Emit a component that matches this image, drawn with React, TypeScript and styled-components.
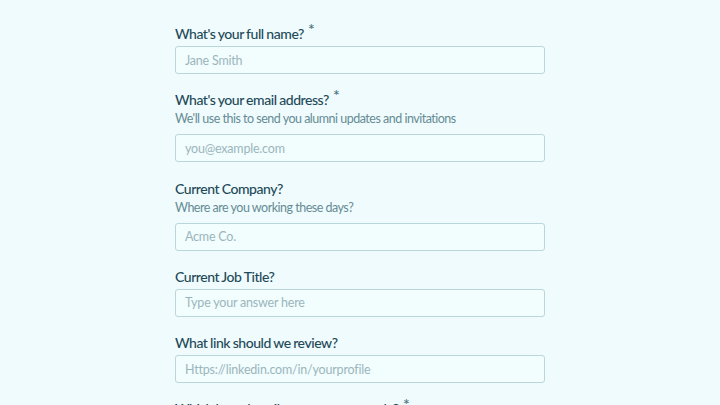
import React from 'react';
import styled, { createGlobalStyle } from 'styled-components';

const GlobalStyle = createGlobalStyle`
  html, body {
    margin: 0;
    padding: 0;
    background: #effbfc;
  }
  body {
    font-family: Lato, "Noto Sans", sans-serif;
    overflow: hidden;
  }
`;

const Page = styled.div`
  width: 720px;
  height: 405px;
  overflow: hidden;
  display: flex;
  justify-content: center;
  background: #effbfc;
`;

const Form = styled.form`
  width: 370px;
  padding-top: 23px;
  display: flex;
  flex-direction: column;
  gap: 15.3px;
`;

const Field = styled.div`
  display: flex;
  flex-direction: column;
`;

const Label = styled.label`
  display: block;
  height: 20px;
  padding-top: 1px;
  box-sizing: border-box;
  font-size: 14px;
  font-weight: 500;
  line-height: 19px;
  letter-spacing: -0.45px;
  word-spacing: -0.5px;
  color: #1e4a59;
  white-space: nowrap;
`;

const Required = styled.span`
  display: inline-block;
  font-size: 16px;
  line-height: 0;
  margin-left: 4px;
  color: #4a7380;
  transform: translateY(-4px);
`;

const Hint = styled.p`
  margin: 0 0 2px;
  height: 20px;
  font-size: 12.5px;
  line-height: 20px;
  letter-spacing: -0.5px;
  color: #668b95;
`;

const Input = styled.input`
  margin-top: 3px;
  height: 28px;
  box-sizing: border-box;
  padding: 0 9px;
  border: 1px solid #b9d6db;
  border-radius: 3px;
  background: #f2fdfe;
  font-family: Lato, "Noto Sans", sans-serif;
  font-size: 12.5px;
  letter-spacing: -0.2px;
  color: #1e4a59;
  outline: none;

  &::placeholder {
    color: #9ab6bc;
  }
`;

type Question = {
  label: string;
  required?: boolean;
  hint?: string;
  placeholder?: string;
};

const questions: Question[] = [
  { label: "What's your full name?", required: true, placeholder: 'Jane Smith' },
  {
    label: "What's your email address?",
    required: true,
    hint: "We'll use this to send you alumni updates and invitations",
    placeholder: 'you@example.com',
  },
  { label: 'Current Company?', hint: 'Where are you working these days?', placeholder: 'Acme Co.' },
  { label: 'Current Job Title?', placeholder: 'Type your answer here' },
  { label: 'What link should we review?', placeholder: 'Https://linkedin.com/in/yourprofile' },
  { label: 'Which best describes your current role?', required: true, placeholder: 'Select an option' },
];

const App: React.FC = () => {
  return (
    <Page>
      <GlobalStyle />
      <Form onSubmit={(e) => e.preventDefault()}>
        {questions.map((q) => (
          <Field key={q.label}>
            <Label>
              {q.label}
              {q.required && <Required>*</Required>}
            </Label>
            {q.hint && <Hint>{q.hint}</Hint>}
            <Input placeholder={q.placeholder} />
          </Field>
        ))}
      </Form>
    </Page>
  );
};

export default App;
